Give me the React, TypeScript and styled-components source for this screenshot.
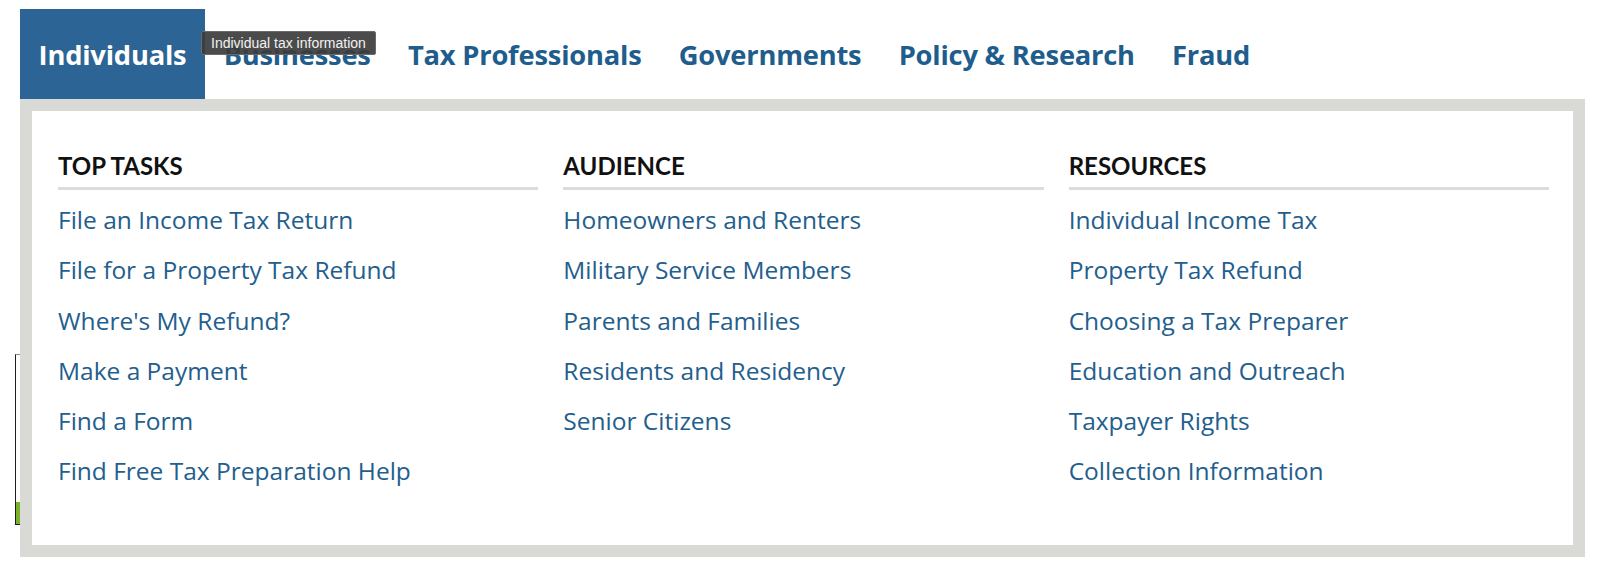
import React from "react"
import styled, { createGlobalStyle } from "styled-components"

/////////////////////////////////////////////////////////////////////////////

const NAV_ITEMS = [
  "Individuals",
  "Businesses",
  "Tax Professionals",
  "Governments",
  "Policy & Research",
  "Fraud",
]

const COLUMNS = [
  {
    title: "TOP TASKS",
    links: [
      "File an Income Tax Return",
      "File for a Property Tax Refund",
      "Where's My Refund?",
      "Make a Payment",
      "Find a Form",
      "Find Free Tax Preparation Help",
    ],
  },
  {
    title: "AUDIENCE",
    links: [
      "Homeowners and Renters",
      "Military Service Members",
      "Parents and Families",
      "Residents and Residency",
      "Senior Citizens",
    ],
  },
  {
    title: "RESOURCES",
    links: [
      "Individual Income Tax",
      "Property Tax Refund",
      "Choosing a Tax Preparer",
      "Education and Outreach",
      "Taxpayer Rights",
      "Collection Information",
    ],
  },
]

const App: React.FC = () => {
  return (
    <Page>
      <GlobalStyle />
      <SideWidget />
      <Nav>
        {NAV_ITEMS.map((item, i) => (
          <NavItem key={item} active={i === 0}>
            {item}
          </NavItem>
        ))}
        <Tooltip>Individual tax information</Tooltip>
      </Nav>
      <MegaMenu>
        <MenuInner>
          {COLUMNS.map((col) => (
            <Column key={col.title}>
              <Heading>{col.title}</Heading>
              <LinkList>
                {col.links.map((link) => (
                  <LinkItem key={link}>
                    <MenuLink href="#">{link}</MenuLink>
                  </LinkItem>
                ))}
              </LinkList>
            </Column>
          ))}
        </MenuInner>
      </MegaMenu>
    </Page>
  )
}

/////////////////////////////////////////////////////////////////////////////

const GlobalStyle = createGlobalStyle`
  html, body {
    margin: 0;
    padding: 0;
    background: #ffffff;
  }
  body {
    font-family: "Open Sans", "Liberation Sans", sans-serif;
  }
`

const Page = styled.div`
  position: relative;
  width: 1600px;
  height: 570px;
  padding: 9px 15px 0 20px;
  box-sizing: border-box;
  overflow: hidden;
`

// bit of another widget peeking out from behind the menu
const SideWidget = styled.div`
  position: absolute;
  left: 15px;
  top: 354px;
  width: 20px;
  height: 171px;
  box-sizing: border-box;
  border: 1px solid #1c1c1c;
  border-top-color: #8a8a8a;
  background: linear-gradient(180deg, #ffffff 0 147px, #79b12a 147px 100%);
`

const Nav = styled.nav`
  position: relative;
  display: flex;
  align-items: flex-start;
`

const NavItem = styled.a<{ active?: boolean }>`
  display: block;
  padding: 4px 18.6px 2px 18.6px;
  line-height: 84px;
  font-family: "Open Sans", "Liberation Sans", sans-serif;
  font-weight: 700;
  font-size: 27.3px;
  letter-spacing: -0.2px;
  white-space: nowrap;
  color: ${(p) => (p.active ? "#ffffff" : "#205d8c")};
  background: ${(p) => (p.active ? "#2c6595" : "transparent")};
  cursor: pointer;
`

const Tooltip = styled.div`
  position: absolute;
  left: 181px;
  top: 22px;
  padding: 0 9px;
  height: 24px;
  line-height: 23px;
  box-sizing: border-box;
  background: rgba(60, 60, 60, 0.92);
  border: 1px solid #6a6a6a;
  border-radius: 2px;
  color: #f2f2f2;
  font-family: "Liberation Sans", "DejaVu Sans", sans-serif;
  font-size: 14px;
  white-space: nowrap;
`

const MegaMenu = styled.div`
  position: relative;
  width: 1565px;
  box-sizing: border-box;
  border: 12px solid #d9d9d6;
  background: #ffffff;
`

const MenuInner = styled.div`
  display: grid;
  grid-template-columns: repeat(3, 1fr);
  column-gap: 25px;
  padding: 41px 24px 48px 26px;
`

const Column = styled.div`
  display: flex;
  flex-direction: column;
`

const Heading = styled.h3`
  margin: 0;
  padding-bottom: 7px;
  border-bottom: 3px solid #dcdcdc;
  font-family: "Lato", "Liberation Sans", sans-serif;
  font-weight: 700;
  font-size: 24px;
  line-height: 28px;
  color: #111111;
`

const LinkList = styled.ul`
  list-style: none;
  margin: 5px 0 0 0;
  padding: 0;
`

const LinkItem = styled.li`
  font-family: "Open Sans", "Liberation Sans", sans-serif;
  font-size: 24.5px;
  line-height: 50.3px;
`

const MenuLink = styled.a`
  color: #235e8d;
  text-decoration: none;
  white-space: nowrap;
`

export default App
